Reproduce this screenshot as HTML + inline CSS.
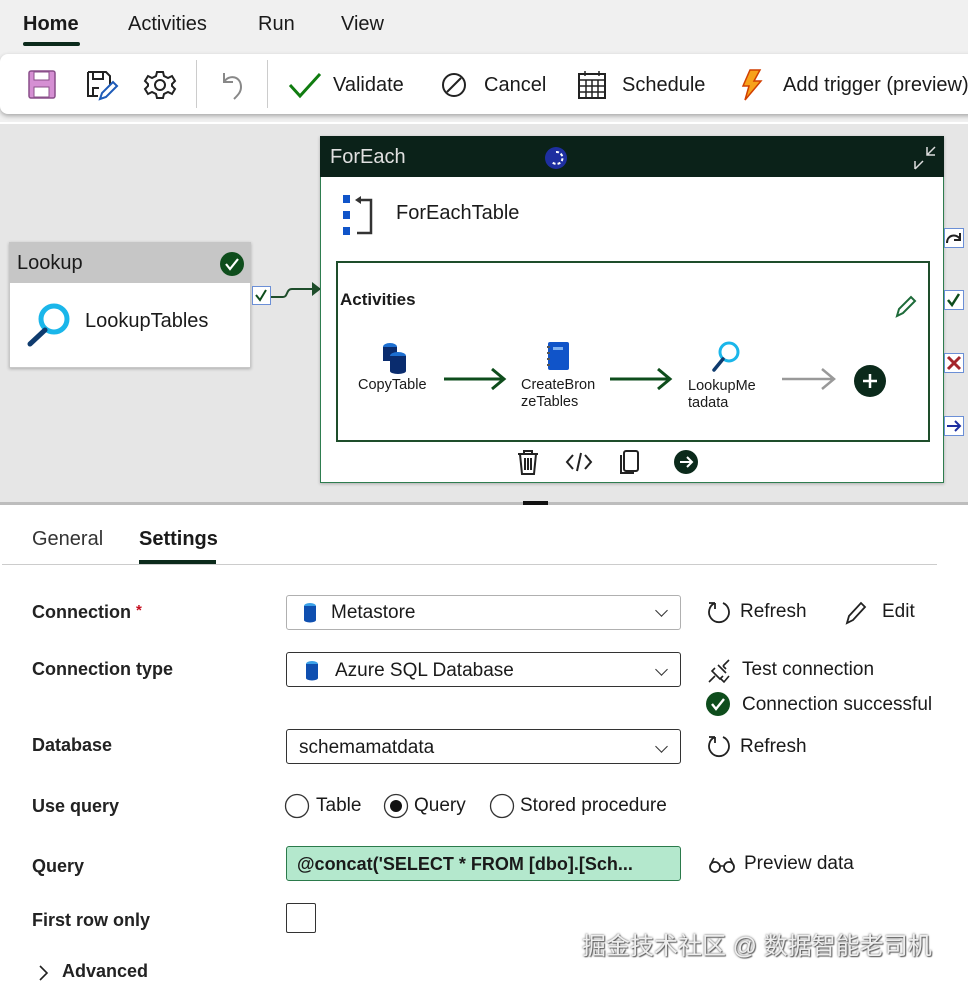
<!DOCTYPE html>
<html><head><meta charset="utf-8">
<style>
*{margin:0;padding:0;box-sizing:border-box}
body{width:968px;height:982px;position:relative;overflow:hidden;background:#fff;font-family:"Liberation Sans","Noto Sans CJK SC",sans-serif;color:#1a1a1a}
.a{position:absolute;white-space:nowrap}
.t{font-size:19px}
.lbl{font-size:18px;font-weight:bold;color:#222}
.fld{position:absolute;left:286px;width:395px;height:35px;border:1px solid #333;border-radius:3px;background:#fff}
.chev{position:absolute;right:14px;top:10px;width:9px;height:9px;border-right:1.5px solid #333;border-bottom:1.5px solid #333;transform:rotate(45deg)}
svg{position:absolute;overflow:visible}
</style></head><body>
<div class="a" style="left:0;top:0;width:968px;height:122px;background:#f0f0f0"></div>
<div class="a t" style="left:23px;top:13px;font-size:20px;font-weight:bold">Home</div>
<div class="a" style="left:23px;top:42px;width:57px;height:4px;background:#0b2a1b;border-radius:2px"></div>
<div class="a t" style="left:128px;top:13px;font-size:20px">Activities</div>
<div class="a t" style="left:258px;top:13px;font-size:20px">Run</div>
<div class="a t" style="left:341px;top:13px;font-size:20px">View</div>
<div class="a" style="left:0;top:54px;width:990px;height:60px;background:#fff;border-radius:8px;box-shadow:0 2px 5px rgba(0,0,0,.3)"></div>
<svg style="left:28px;top:70px" width="28" height="30"><rect x="1" y="1" width="26" height="27" rx="2" fill="#d58fd3" stroke="#8a4f8a" stroke-width="1.5"/><rect x="6" y="2" width="15" height="8" fill="#fff" stroke="#8a4f8a"/><rect x="6" y="17" width="15" height="10" fill="#fff" stroke="#8a4f8a"/></svg>
<svg style="left:86px;top:70px" width="32" height="32"><path d="M2 2h18l4 4v10M2 2v24h10" fill="none" stroke="#222" stroke-width="2"/><path d="M7 2v7h10V2M7 26v-8h6" fill="none" stroke="#222" stroke-width="2"/><path d="M14 29l2-6 11-11 4 4-11 11z" fill="#fff" stroke="#1e5bb8" stroke-width="2"/></svg>
<svg style="left:145px;top:70px" width="30" height="30"><circle cx="15" cy="15" r="5" fill="none" stroke="#222" stroke-width="2"/><path d="M12 2h6l1 4 4 2 4-2 3 5-3 3v2l3 3-3 5-4-2-4 2-1 4h-6l-1-4-4-2-4 2-3-5 3-3v-2l-3-3 3-5 4 2 4-2z" fill="none" stroke="#222" stroke-width="2"/></svg>
<div class="a" style="left:196px;top:60px;width:1px;height:48px;background:#ccc"></div>
<svg style="left:218px;top:70px" width="28" height="30"><path d="M6 3v9h9M6 12c5-8 17-6 17 5 0 5-3 8-7 12" fill="none" stroke="#888" stroke-width="2"/></svg>
<div class="a" style="left:267px;top:60px;width:1px;height:48px;background:#ccc"></div>
<svg style="left:288px;top:72px" width="34" height="26"><path d="M2 13l10 11L32 2" fill="none" stroke="#107c10" stroke-width="3"/></svg>
<div class="a t" style="left:333px;top:74px;font-size:20px">Validate</div>
<svg style="left:441px;top:72px" width="26" height="26"><circle cx="13" cy="13" r="11" fill="none" stroke="#222" stroke-width="2"/><path d="M6 20L20 6" stroke="#222" stroke-width="2"/></svg>
<div class="a t" style="left:484px;top:74px;font-size:20px">Cancel</div>
<svg style="left:578px;top:71px" width="28" height="28"><rect x="1" y="3" width="26" height="24" fill="none" stroke="#222" stroke-width="2"/><path d="M1 9h26M1 15h26M1 21h26M8 9v18M14 9v18M20 9v18M7 0v5M21 0v5" stroke="#222" stroke-width="1.5"/></svg>
<div class="a t" style="left:622px;top:74px;font-size:20px">Schedule</div>
<svg style="left:740px;top:69px" width="24" height="32"><path d="M10 1h10l-6 11h7L5 31l4-14H3z" fill="#f7a21b" stroke="#d13f00" stroke-width="1.5"/></svg>
<div class="a t" style="left:783px;top:74px;font-size:20px">Add trigger (preview)</div>

<div class="a" style="left:0;top:124px;width:968px;height:378px;background:#e6e6e6"></div>
<!-- Lookup -->
<div class="a" style="left:9px;top:242px;width:242px;height:126px;background:#fff;border:1px solid #c8c8c8;box-shadow:0 1px 3px rgba(0,0,0,.25)"></div>
<div class="a" style="left:9px;top:242px;width:242px;height:41px;background:#c6c6c6"></div>
<div class="a" style="left:17px;top:252px;font-size:20px">Lookup</div>
<svg style="left:220px;top:252px" width="24" height="24"><circle cx="12" cy="12" r="12" fill="#0e4d1c"/><path d="M6 12l4 5 8-10" fill="none" stroke="#fff" stroke-width="2.2"/></svg>
<svg style="left:27px;top:302px" width="46" height="44"><circle cx="27" cy="17" r="13" fill="none" stroke="#1ab6ea" stroke-width="5"/><path d="M18 28L3 42" stroke="#0f3b6e" stroke-width="5" stroke-linecap="round"/></svg>
<div class="a" style="left:85px;top:310px;font-size:20px">LookupTables</div>
<svg style="left:252px;top:286px" width="70" height="20"><rect x="0.5" y="0.5" width="18" height="18" fill="#fff" stroke="#6b8fd6"/><path d="M4 9l4 5 6-10" fill="none" stroke="#0e4d1c" stroke-width="2"/><path d="M19 11h12c5 0 3-8 9-8h28" fill="none" stroke="#1e4d2b" stroke-width="2"/><path d="M60 -4l9 7-9 7z" fill="#1e4d2b"/></svg>
<!-- ForEach -->
<div class="a" style="left:320px;top:136px;width:624px;height:347px;background:#fff;border:1.5px solid #2e7d4f;box-shadow:0 1px 3px rgba(0,0,0,.25)"></div>
<div class="a" style="left:320px;top:136px;width:624px;height:41px;background:#0b2219"></div>
<div class="a" style="left:330px;top:146px;font-size:20px;color:#e0e0e0">ForEach</div>
<svg style="left:545px;top:147px" width="22" height="22"><circle cx="11" cy="11" r="11" fill="#1e2fa0"/><path d="M11 5a6 6 0 1 1 -4 10" fill="none" stroke="#fff" stroke-width="2" stroke-dasharray="3 2"/></svg>
<svg style="left:913px;top:145px" width="26" height="26"><path d="M2 24L10 16M2 16v8h0M22 2l-8 8M14 2v8h8" fill="none" stroke="#ddd" stroke-width="1.5"/></svg>
<svg style="left:343px;top:195px" width="32" height="42"><rect x="0" y="0" width="7" height="8" fill="#1054c9"/><rect x="0" y="16" width="7" height="8" fill="#1054c9"/><rect x="0" y="32" width="7" height="8" fill="#1054c9"/><path d="M16 5h12v33h-14" fill="none" stroke="#333" stroke-width="2.5"/><path d="M12 5l6-4v8z" fill="#333"/></svg>
<div class="a" style="left:396px;top:202px;font-size:20px">ForEachTable</div>
<div class="a" style="left:336px;top:261px;width:594px;height:181px;border:2px solid #1e4d2b"></div>
<div class="a" style="left:340px;top:290px;font-size:17px;font-weight:bold">Activities</div>
<svg style="left:894px;top:295px" width="22" height="24"><path d="M3 21l2-7 12-12 4 4-12 12z" fill="none" stroke="#1e6b3a" stroke-width="2"/></svg>
<svg style="left:380px;top:342px" width="30" height="32"><ellipse cx="10" cy="5" rx="7" ry="4" fill="#1d6fd1"/><rect x="3" y="5" width="14" height="14" fill="#0a2c6e"/><ellipse cx="18" cy="14" rx="8" ry="4" fill="#1d6fd1"/><rect x="10" y="14" width="16" height="15" fill="#0a2c6e"/><ellipse cx="18" cy="29" rx="8" ry="3" fill="#0a2c6e"/></svg>
<div class="a" style="left:358px;top:377px;font-size:14.5px">CopyTable</div>
<svg style="left:444px;top:367px" width="64" height="24"><path d="M0 12h60M48 2l12 10-12 10" fill="none" stroke="#0e4d1c" stroke-width="3"/></svg>
<svg style="left:545px;top:342px" width="26" height="30"><rect x="3" y="0" width="21" height="28" rx="2" fill="#1054c9"/><rect x="8" y="5" width="10" height="3" fill="#7fb1f0"/><path d="M2 5h3M2 11h3M2 17h3M2 23h3" stroke="#555" stroke-width="2"/></svg>
<div class="a" style="left:521px;top:377px;font-size:14.5px;line-height:17px">CreateBron<br>zeTables</div>
<svg style="left:610px;top:367px" width="64" height="24"><path d="M0 12h60M48 2l12 10-12 10" fill="none" stroke="#0e4d1c" stroke-width="3"/></svg>
<svg style="left:710px;top:340px" width="32" height="34"><circle cx="19" cy="12" r="9" fill="none" stroke="#1ab6ea" stroke-width="3"/><path d="M13 19L4 30" stroke="#0f3b6e" stroke-width="3.5" stroke-linecap="round"/></svg>
<div class="a" style="left:688px;top:378px;font-size:14.5px;line-height:17px">LookupMe<br>tadata</div>
<svg style="left:782px;top:367px" width="56" height="24"><path d="M0 12h52M40 2l12 10-12 10" fill="none" stroke="#999" stroke-width="2.5"/></svg>
<svg style="left:854px;top:365px" width="32" height="32"><circle cx="16" cy="16" r="16" fill="#0b2a1b"/><path d="M16 9v14M9 16h14" stroke="#fff" stroke-width="2.5"/></svg>
<svg style="left:516px;top:450px" width="24" height="26"><path d="M2 4h20M8 4V1h8v3M4 4l2 20h12l2-20M9 8v12M12 8v12M15 8v12" fill="none" stroke="#222" stroke-width="2"/></svg>
<svg style="left:566px;top:452px" width="26" height="20"><path d="M7 3L1 10l6 7M19 3l6 7-6 7M15 1l-4 18" fill="none" stroke="#222" stroke-width="2"/></svg>
<svg style="left:619px;top:450px" width="22" height="26"><rect x="5" y="1" width="14" height="20" rx="2" fill="none" stroke="#222" stroke-width="2"/><path d="M2 5v18h13" fill="none" stroke="#222" stroke-width="2"/></svg>
<svg style="left:674px;top:450px" width="24" height="24"><circle cx="12" cy="12" r="12" fill="#0b2a1b"/><path d="M6 12h11M13 7l5 5-5 5" fill="none" stroke="#fff" stroke-width="2"/></svg>
<!-- ports -->
<svg style="left:944px;top:228px" width="22" height="220"><g fill="#fff" stroke="#6b8fd6"><rect x="0.5" y="0.5" width="19" height="19"/><rect x="0.5" y="62.5" width="19" height="19"/><rect x="0.5" y="125.5" width="19" height="19"/><rect x="0.5" y="188.5" width="19" height="19"/></g><path d="M3 15c0-8 9-10 13-4M16 5v7h-6" fill="none" stroke="#222" stroke-width="2"/><path d="M4 72l4 5 7-11" fill="none" stroke="#0e4d1c" stroke-width="2.5"/><path d="M4 129l12 12M16 129l-12 12" stroke="#a4262c" stroke-width="3"/><path d="M3 198h13M11 193l5 5-5 5" fill="none" stroke="#1e2fa0" stroke-width="2"/></svg>
<!-- divider -->
<div class="a" style="left:0;top:502px;width:968px;height:3px;background:#bdbdbd"></div>
<div class="a" style="left:523px;top:501px;width:25px;height:4px;background:#111"></div>
<!-- tabs -->
<div class="a" style="left:32px;top:528px;font-size:20px;color:#333">General</div>
<div class="a" style="left:139px;top:528px;font-size:20px;font-weight:bold">Settings</div>
<div class="a" style="left:139px;top:560px;width:77px;height:4px;background:#0b2a1b"></div>
<div class="a" style="left:2px;top:564px;width:935px;height:1px;background:#ccc"></div>
<!-- form -->
<div class="a lbl" style="left:32px;top:602px">Connection <span style="color:#c50f1f;font-size:15px;vertical-align:top">*</span></div>
<div class="fld" style="top:595px;border-color:#b0b0b0"><svg style="left:16px;top:7px" width="14" height="20"><ellipse cx="7" cy="3" rx="6" ry="3" fill="#3aa0e8"/><rect x="1" y="3" width="12" height="14" fill="#0f4fb0"/><ellipse cx="7" cy="17" rx="6" ry="2.5" fill="#0f4fb0"/></svg><div class="a t" style="left:44px;top:6px">Metastore</div><div class="chev"></div></div>
<svg style="left:707px;top:600px" width="26" height="26"><path d="M8 3a10 10 0 1 0 8 0M8 3v6M8 3H2" fill="none" stroke="#222" stroke-width="1.8"/></svg>
<div class="a t" style="left:740px;top:601px">Refresh</div>
<svg style="left:844px;top:600px" width="24" height="26"><path d="M3 23l2-7 12-13 4 4-12 13z" fill="none" stroke="#222" stroke-width="1.8"/></svg>
<div class="a t" style="left:882px;top:601px">Edit</div>

<div class="a lbl" style="left:32px;top:659px">Connection type</div>
<div class="fld" style="top:652px"><svg style="left:18px;top:8px" width="14" height="20"><ellipse cx="7" cy="3" rx="6" ry="3" fill="#3aa0e8"/><rect x="1" y="3" width="12" height="14" fill="#0f4fb0"/><ellipse cx="7" cy="17" rx="6" ry="2.5" fill="#0f4fb0"/></svg><div class="a t" style="left:48px;top:7px">Azure SQL Database</div><div class="chev" style="top:12px"></div></div>
<svg style="left:706px;top:657px" width="26" height="28"><path d="M3 25l6-6M23 3l-6 6M6 14l8 8M12 8l8 8M9 11l-3 3 8 8 3-3M17 9l3 3" fill="none" stroke="#222" stroke-width="1.6"/><path d="M15 22l3 3 5-6" fill="none" stroke="#222" stroke-width="1.6"/></svg>
<div class="a t" style="left:742px;top:659px">Test connection</div>
<svg style="left:706px;top:692px" width="24" height="24"><circle cx="12" cy="12" r="12" fill="#0e4d1c"/><path d="M6 12l4 5 8-10" fill="none" stroke="#fff" stroke-width="2.4"/></svg>
<div class="a t" style="left:742px;top:694px">Connection successful</div>

<div class="a lbl" style="left:32px;top:735px">Database</div>
<div class="fld" style="top:729px"><div class="a t" style="left:12px;top:7px">schemamatdata</div><div class="chev" style="top:12px"></div></div>
<svg style="left:707px;top:734px" width="26" height="26"><path d="M8 3a10 10 0 1 0 8 0M8 3v6M8 3H2" fill="none" stroke="#222" stroke-width="1.8"/></svg>
<div class="a t" style="left:740px;top:736px">Refresh</div>

<div class="a lbl" style="left:32px;top:796px">Use query</div>
<svg style="left:285px;top:793px" width="250" height="26"><circle cx="12" cy="13" r="11.5" fill="#fff" stroke="#333" stroke-width="1.3"/><circle cx="111" cy="13" r="11.5" fill="#fff" stroke="#333" stroke-width="1.3"/><circle cx="111" cy="13" r="6" fill="#111"/><circle cx="217" cy="13" r="11.5" fill="#fff" stroke="#333" stroke-width="1.3"/></svg>
<div class="a t" style="left:316px;top:795px">Table</div>
<div class="a t" style="left:414px;top:795px">Query</div>
<div class="a t" style="left:520px;top:795px">Stored procedure</div>

<div class="a lbl" style="left:32px;top:856px">Query</div>
<div class="fld" style="top:846px;background:#b4e8cd;border-color:#2b7a4b"><div class="a t" style="left:10px;top:7px;font-weight:bold;font-size:18px">@concat('SELECT * FROM [dbo].[Sch...</div></div>
<svg style="left:709px;top:856px" width="26" height="18"><circle cx="6" cy="11" r="5" fill="none" stroke="#222" stroke-width="1.8"/><circle cx="20" cy="11" r="5" fill="none" stroke="#222" stroke-width="1.8"/><path d="M11 10h4M1 10l4-8M25 10l-4-8" fill="none" stroke="#222" stroke-width="1.6"/></svg>
<div class="a t" style="left:744px;top:853px">Preview data</div>

<div class="a lbl" style="left:32px;top:910px">First row only</div>
<div class="a" style="left:286px;top:903px;width:30px;height:30px;border:1.3px solid #333;border-radius:2px"></div>
<div class="a" style="left:582px;top:926px;font-size:24px;color:#eee;text-shadow:0 0 2px #555,1px 1px 1px #666">掘金技术社区 @ 数据智能老司机</div>
<svg style="left:38px;top:964px" width="12" height="18"><path d="M2 2l7 7-7 7" fill="none" stroke="#222" stroke-width="1.6"/></svg>
<div class="a lbl" style="left:62px;top:961px">Advanced</div>
</body></html>
